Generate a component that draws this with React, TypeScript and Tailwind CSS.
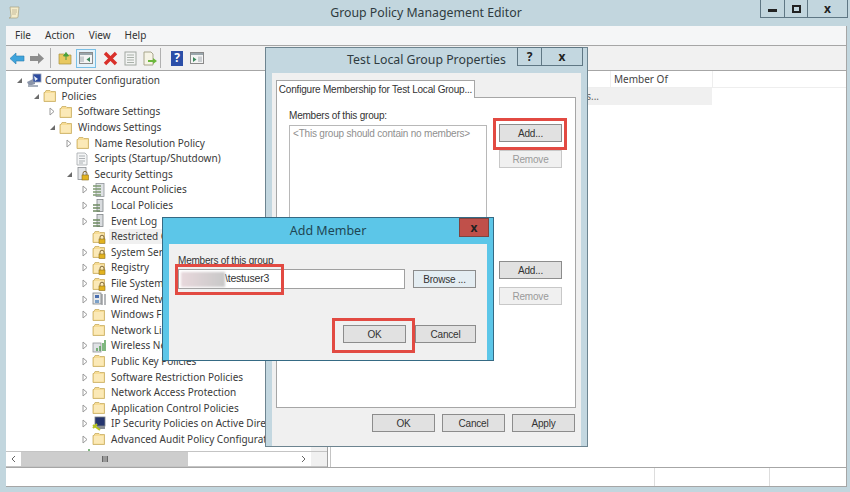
import type { ReactNode } from 'react';

type IconKind = 'computer' | 'folder' | 'lockFolder' | 'script' | 'shield' | 'policy' | 'log' | 'wired' | 'wireless' | 'ipsec';

interface TreeNode {
  label: string;
  depth: number;
  icon: IconKind;
  arrow?: 'open' | 'closed';
  selected?: boolean;
}

const tree: TreeNode[] = [
  { label: 'Computer Configuration', depth: 0, icon: 'computer', arrow: 'open' },
  { label: 'Policies', depth: 1, icon: 'folder', arrow: 'open' },
  { label: 'Software Settings', depth: 2, icon: 'folder', arrow: 'closed' },
  { label: 'Windows Settings', depth: 2, icon: 'folder', arrow: 'open' },
  { label: 'Name Resolution Policy', depth: 3, icon: 'folder', arrow: 'closed' },
  { label: 'Scripts (Startup/Shutdown)', depth: 3, icon: 'script' },
  { label: 'Security Settings', depth: 3, icon: 'shield', arrow: 'open' },
  { label: 'Account Policies', depth: 4, icon: 'policy', arrow: 'closed' },
  { label: 'Local Policies', depth: 4, icon: 'log', arrow: 'closed' },
  { label: 'Event Log', depth: 4, icon: 'log', arrow: 'closed' },
  { label: 'Restricted Groups', depth: 4, icon: 'lockFolder', selected: true },
  { label: 'System Services', depth: 4, icon: 'lockFolder', arrow: 'closed' },
  { label: 'Registry', depth: 4, icon: 'lockFolder', arrow: 'closed' },
  { label: 'File System', depth: 4, icon: 'lockFolder', arrow: 'closed' },
  { label: 'Wired Network (IEEE 802.3) Policies', depth: 4, icon: 'wired', arrow: 'closed' },
  { label: 'Windows Firewall with Advanced Security', depth: 4, icon: 'folder', arrow: 'closed' },
  { label: 'Network List Manager Policies', depth: 4, icon: 'folder' },
  { label: 'Wireless Network (IEEE 802.11) Policies', depth: 4, icon: 'wireless', arrow: 'closed' },
  { label: 'Public Key Policies', depth: 4, icon: 'folder', arrow: 'closed' },
  { label: 'Software Restriction Policies', depth: 4, icon: 'folder', arrow: 'closed' },
  { label: 'Network Access Protection', depth: 4, icon: 'folder', arrow: 'closed' },
  { label: 'Application Control Policies', depth: 4, icon: 'folder', arrow: 'closed' },
  { label: 'IP Security Policies on Active Directory', depth: 4, icon: 'ipsec', arrow: 'closed' },
  { label: 'Advanced Audit Policy Configuration', depth: 4, icon: 'folder', arrow: 'closed' },
  { label: 'Policy-based QoS', depth: 3, icon: 'wireless', arrow: 'closed' },
];

function Folder({ lock }: { lock?: boolean }) {
  return (
    <svg width="14" height="14" viewBox="0 0 14 14">
      <path d="M1 3.5V12.5H12.5V2.5H8L7 1.5H3L2 3.5Z" fill="#f7dc94" stroke="#c9ad62" strokeWidth="0.8" />
      <rect x="2" y="4" width="9.5" height="7.5" fill="#fbe9b7" />
      {lock && (
        <g>
          <path d="M8 9V7.2a2 2 0 0 1 4 0V9" fill="none" stroke="#80683a" strokeWidth="1" />
          <rect x="7" y="9" width="6" height="4.5" fill="#e2b21f" stroke="#8a6d1c" strokeWidth="0.6" />
        </g>
      )}
    </svg>
  );
}

function TreeIcon({ kind }: { kind: IconKind }) {
  if (kind === 'folder') return <Folder />;
  if (kind === 'lockFolder') return <Folder lock />;
  if (kind === 'shield') {
    return (
      <svg width="14" height="14" viewBox="0 0 14 14">
        <rect x="2" y="0.5" width="8" height="12" fill="#e4e6e8" stroke="#8c9094" strokeWidth="0.8" />
        <path d="M7 8V6.4a2 2 0 0 1 4 0V8" fill="none" stroke="#80683a" strokeWidth="1" />
        <rect x="6" y="8" width="6.5" height="5" fill="#e2b21f" stroke="#8a6d1c" strokeWidth="0.6" />
      </svg>
    );
  }
  if (kind === 'computer') {
    return (
      <svg width="16" height="15" viewBox="0 0 16 15">
        <path d="M1 9L9 5V11L3 13Z" fill="#8a94a8" />
        <rect x="7" y="1" width="8" height="8" fill="#2b4aa0" stroke="#98a2b4" strokeWidth="0.8" />
        <path d="M8 3L12 6L9 8Z" fill="#e8f0fa" />
        <rect x="2" y="12" width="10" height="2" fill="#a8b0bc" />
      </svg>
    );
  }
  if (kind === 'script') {
    return (
      <svg width="13" height="14" viewBox="0 0 13 14">
        <path d="M1 1H9L11 3V13H1Z" fill="#f4f5f6" stroke="#a4a8ac" strokeWidth="0.8" />
        <path d="M3 4H9M3 6.5H9M3 9H9M3 11H7" stroke="#9a9ea3" strokeWidth="0.8" />
      </svg>
    );
  }
  if (kind === 'policy') {
    return (
      <svg width="14" height="14" viewBox="0 0 14 14">
        <rect x="4" y="0.5" width="8" height="13" fill="#dfe2e5" stroke="#8f9498" strokeWidth="0.8" />
        <path d="M1 3H9M1 6H9M1 9H9M1 12H9" stroke="#7f9a72" strokeWidth="1.4" />
      </svg>
    );
  }
  if (kind === 'log') {
    return (
      <svg width="13" height="14" viewBox="0 0 13 14">
        <rect x="5" y="0.5" width="6" height="12" fill="#d9dcdf" stroke="#7f8488" strokeWidth="0.8" />
        <path d="M1 6H8M1 9H8M1 12H8" stroke="#6f8a62" strokeWidth="1.4" />
      </svg>
    );
  }
  if (kind === 'wired') {
    return (
      <svg width="14" height="14" viewBox="0 0 14 14">
        <rect x="1" y="1" width="8" height="11" fill="#e6e8ea" stroke="#7d8286" strokeWidth="0.8" />
        <rect x="3" y="3" width="4" height="3" fill="#4a6fb0" />
        <path d="M10 2V13M13 2V13" stroke="#6c7176" strokeWidth="1" />
        <rect x="3" y="8" width="4" height="3" fill="#7aa0c8" />
      </svg>
    );
  }
  if (kind === 'wireless') {
    return (
      <svg width="14" height="14" viewBox="0 0 14 14">
        <rect x="1" y="4" width="8" height="9" fill="#dfe2e5" stroke="#8f9498" strokeWidth="0.8" />
        <path d="M5 12V9M8 12V7M11 12V4M13 12V1" stroke="#4a9a4a" strokeWidth="1.4" />
      </svg>
    );
  }
  return (
    <svg width="14" height="15" viewBox="0 0 14 15">
      <rect x="3" y="1" width="10" height="9" fill="#24356e" stroke="#7d8286" strokeWidth="0.8" />
      <rect x="5" y="10" width="8" height="3" fill="#8a8f94" />
      <path d="M1 9L8 14M1 12L5 8" stroke="#b8c420" strokeWidth="2" />
    </svg>
  );
}

function TreeRow({ node }: { node: TreeNode }) {
  return (
    <div className="flex h-[15.6px] items-center whitespace-nowrap" style={{ paddingLeft: node.depth * 16.5 }}>
      <span className="flex h-2 w-[10px] shrink-0 items-center justify-start">
        {node.arrow === 'open' && (
          <svg width="7" height="7" viewBox="0 0 7 7">
            <path d="M6 1V6H1Z" fill="#6b6b6b" />
          </svg>
        )}
        {node.arrow === 'closed' && (
          <svg width="6" height="9" viewBox="0 0 6 9">
            <path d="M1 1L5 4.5L1 8Z" fill="#fff" stroke="#9a9a9a" />
          </svg>
        )}
      </span>
      <span className="flex w-[17px] shrink-0 items-center">
        <TreeIcon kind={node.icon} />
      </span>
      <span className={node.selected ? 'bg-[#f0f0f0] pl-[2px] pr-1' : 'pl-[2px]'}>{node.label}</span>
    </div>
  );
}

function WinButton({ children, disabled, className }: { children: ReactNode; disabled?: boolean; className?: string }) {
  const look = disabled
    ? 'border-[#c8c8c8] bg-[#f0f0f0] text-[#9a9a9a]'
    : 'border-[#8c8c8c] bg-[#e1e1e1] text-[#333]';
  return (
    <div className={`flex h-[18px] w-[63px] items-center justify-center border ${look} ${className ?? ''}`}>
      {children}
    </div>
  );
}

function ToolIcon({ children }: { children: ReactNode }) {
  return <span className="flex h-[18px] w-[20px] items-center justify-center">{children}</span>;
}

function Toolbar() {
  return (
    <div className="flex h-[25px] items-center border-b border-[#a6a6a6] bg-[#f1f1f1] pl-[1px]">
      <ToolIcon>
        <svg width="16" height="13" viewBox="0 0 16 13">
          <path d="M1 6.5L7 1V4H15V9H7V12Z" fill="#3fa4dc" stroke="#2a7db0" strokeWidth="0.6" />
        </svg>
      </ToolIcon>
      <ToolIcon>
        <svg width="16" height="13" viewBox="0 0 16 13">
          <path d="M15 6.5L9 1V4H1V9H9V12Z" fill="#8d8d8d" />
        </svg>
      </ToolIcon>
      <span className="mx-[3px] h-[20px] w-px bg-[#b0b0b0]" />
      <span className="w-[1px]" />
      <ToolIcon>
        <svg width="15" height="14" viewBox="0 0 15 14">
          <path d="M1 3H6L7 4H13V13H1Z" fill="#e8c860" stroke="#a88f3c" strokeWidth="0.7" />
          <path d="M8 9V4M5.5 5L8 1.5L10.5 5Z" fill="#4aa03c" stroke="#4aa03c" />
        </svg>
      </ToolIcon>
      <span className="ml-px flex h-[19px] w-[20px] items-center justify-center border border-[#79bfe6] bg-[#e4f2fa]">
        <svg width="14" height="12" viewBox="0 0 14 12">
          <rect x="0.5" y="0.5" width="13" height="11" fill="#f4f4f4" stroke="#8a8a8a" />
          <rect x="1" y="1" width="12" height="2" fill="#9aa6ac" />
          <path d="M2 4.5V10M4 4.5V10" stroke="#a0a8ae" />
          <path d="M11 5V10L7.5 7.5Z" fill="#3c8a5c" />
        </svg>
      </span>
      <span className="w-[4px]" />
      <ToolIcon>
        <svg width="15" height="15" viewBox="0 0 15 15">
          <path d="M2 2L13 13M13 2L2 13" stroke="#d9302a" strokeWidth="3.4" />
        </svg>
      </ToolIcon>
      <ToolIcon>
        <svg width="13" height="15" viewBox="0 0 13 15">
          <rect x="1" y="1" width="11" height="13" fill="#f2f3f2" stroke="#a2a8a2" />
          <path d="M3 4H10M3 6.5H10M3 9H10M3 11.5H10" stroke="#a8b0a8" />
        </svg>
      </ToolIcon>
      <ToolIcon>
        <svg width="15" height="15" viewBox="0 0 15 15">
          <path d="M1 1H8L10 3V14H1Z" fill="#f6f4e6" stroke="#a8a68c" />
          <path d="M5 9H10V7L14 10L10 13V11H5Z" fill="#6cb83c" />
        </svg>
      </ToolIcon>
      <span className="mr-[3px] h-[20px] w-px bg-[#b0b0b0]" />
      <span className="w-[3px]" />
      <ToolIcon>
        <span className="flex h-[15px] w-[12px] items-center justify-center bg-[#2c4fa8] text-[12px] font-bold leading-none text-white">?</span>
      </ToolIcon>
      <ToolIcon>
        <svg width="14" height="12" viewBox="0 0 14 12">
          <rect x="0.5" y="0.5" width="13" height="11" fill="#f4f4f4" stroke="#8a8a8a" />
          <rect x="1" y="1" width="12" height="2" fill="#9aa6ac" />
          <path d="M3 5V10L6.5 7.5Z" fill="#3c8a5c" />
          <path d="M9 4.5V10M11 4.5V10" stroke="#a0a8ae" />
        </svg>
      </ToolIcon>
    </div>
  );
}

function TreePane() {
  return (
    <div className="flex h-full w-[322px] shrink-0 flex-col border-r border-[#a0a0a0]">
      <div className="flex min-h-0 flex-1">
        <div className="min-w-0 flex-1 overflow-hidden pt-[2px] pl-[10px] text-[#3a3a3a]">
          {tree.map((node) => (
            <TreeRow key={node.label} node={node} />
          ))}
        </div>
        <div className="w-[16px] shrink-0 bg-[#f0f0f0]" />
      </div>
      <div className="flex h-[16px] shrink-0 border-y border-[#c4c4c4] bg-white">
        <span className="flex w-[15px] items-center justify-center text-[#777]">
          <svg width="5" height="8" viewBox="0 0 5 8"><path d="M4 1L1 4L4 7" fill="none" stroke="#666" /></svg>
        </span>
        <span className="flex w-[167px] items-center justify-center bg-[#cdcdcd]">
          <span className="h-[6px] w-[6px] border-x border-[#666] bg-[#999]" />
        </span>
        <span className="flex-1" />
        <span className="flex w-[15px] items-center justify-center">
          <svg width="5" height="8" viewBox="0 0 5 8"><path d="M1 1L4 4L1 7" fill="none" stroke="#666" /></svg>
        </span>
        <span className="w-[16px] bg-[#f0f0f0]" />
      </div>
    </div>
  );
}

const dialogFont = { fontFamily: '"Liberation Sans", Arial, sans-serif' };

function PropertiesDialog() {
  return (
    <div className="absolute left-[265px] top-[47px] flex h-[400px] w-[323px] flex-col border border-[#6d8490] bg-[#c3d7e0]">
      <div className="relative flex h-[25px] shrink-0 items-center justify-center text-[12.3px] text-[#2f3b40]">
        Test Local Group Properties
        <div className="absolute right-[4px] top-[-1px] flex h-[19px] border border-[#5f7784] text-[12px] font-bold text-[#222]">
          <span className="flex w-[24px] items-center justify-center border-r border-[#5f7784]">?</span>
          <span className="flex w-[40px] items-center justify-center">x</span>
        </div>
      </div>
      <div
        className="mx-[6px] flex min-h-0 flex-1 flex-col bg-[#f0f0f0] pl-[4px] pr-[5px] pt-[7px] text-[10px] tracking-[-0.2px]"
        style={dialogFont}
      >
        <div className="relative z-10 -mb-px flex h-[18px] w-[199px] items-center justify-center whitespace-nowrap border border-b-0 border-[#a6a6a6] bg-white text-[#333]">
          Configure Membership for Test Local Group...
        </div>
        <div className="flex h-[311px] border border-[#a6a6a6] bg-white pl-[12px] pt-[12px]">
          <div className="flex w-[198px] flex-col">
            <span className="mb-[3px] leading-[12px] text-[#333]">Members of this group:</span>
            <div className="h-[95px] whitespace-nowrap border border-[#b8b8b8] px-[3px] leading-[16px] text-[#8f8f8f]">
              &lt;This group should contain no members&gt;
            </div>
          </div>
          <div className="ml-[12px] flex flex-col pt-[14px]">
            <WinButton>Add...</WinButton>
            <WinButton disabled className="mt-[8px]">Remove</WinButton>
            <WinButton className="mt-[93px]">Add...</WinButton>
            <WinButton disabled className="mt-[8px]">Remove</WinButton>
          </div>
        </div>
        <div className="flex justify-end gap-[7px] pr-px pt-[6px]">
          <WinButton>OK</WinButton>
          <WinButton>Cancel</WinButton>
          <WinButton>Apply</WinButton>
        </div>
      </div>
      <span className="absolute left-[227px] top-[70px] h-[32px] w-[74px] border-[3px] border-[#e24a42]" />
    </div>
  );
}

function AddMemberDialog() {
  return (
    <div className="absolute left-[162px] top-[217px] flex h-[144px] w-[332px] flex-col border border-[#356a84] bg-[#5cc6e8]">
      <div className="relative flex h-[26px] shrink-0 items-center justify-center text-[12.5px] text-[#1f4654]">
        Add Member
        <span className="absolute right-[4px] top-0 flex h-[19px] w-[30px] items-center justify-center border border-[#7e4440] bg-[#c0504a] text-[12px] font-bold text-[#222]">
          x
        </span>
      </div>
      <div
        className="mx-[6px] flex min-h-0 flex-1 flex-col bg-[#f0f0f0] pl-[9px] pr-[9px] pt-[11px] text-[10px] tracking-[-0.2px] text-[#333]"
        style={dialogFont}
      >
        <span className="leading-[12px]">Members of this group</span>
        <div className="mt-[2px] flex items-center">
          <div className="flex h-[20px] w-[227px] items-center border border-[#a0a0a0] bg-white">
            <span className="ml-[2px] h-[15px] w-[44px] bg-gradient-to-r from-[#e8d8dc] to-[#c8c8c8] blur-[1px]" />
            <span className="text-[10.5px]">\testuser3</span>
          </div>
          <WinButton className="ml-[8px] border-[#7aa0bc] bg-[#e4edf2]">Browse ...</WinButton>
        </div>
        <div className="mt-[36px] flex justify-end gap-[9px] pr-[2px]">
          <WinButton>OK</WinButton>
          <WinButton className="w-[61px]!">Cancel</WinButton>
        </div>
      </div>
      <span className="absolute left-[12px] top-[46px] h-[31px] w-[109px] border-[3px] border-[#e24a42]" />
      <span className="absolute left-[169px] top-[100px] h-[35px] w-[83px] border-[3px] border-[#e24a42]" />
    </div>
  );
}

export default function App() {
  return (
    <div
      className="relative flex h-[492px] w-[850px] flex-col overflow-hidden bg-[#c2d6de] text-[10px] text-[#333]"
      style={{ fontFamily: '"Noto Sans", "Open Sans", sans-serif' }}
    >
      <div className="relative flex h-[26px] shrink-0 items-center justify-center text-[12.3px] text-[#2f3b40]">
        <svg className="absolute left-[8px] top-[6px]" width="12" height="13" viewBox="0 0 12 13">
          <path d="M2 1H11L10 11Q10 12 8 12H1Q3 12 3 10Z" fill="#f4eccb" stroke="#a8a080" strokeWidth="0.7" />
          <path d="M4 4H9M4 6H9M4 8H8" stroke="#b0a888" strokeWidth="0.7" />
        </svg>
        <span className="pl-[2px]">Group Policy Management Editor</span>
        <div className="absolute right-[2px] top-0 flex h-[18px] border border-t-0 border-[#5f7784]">
          <span className="flex w-[24px] items-center justify-center border-r border-[#5f7784]">
            <span className="mt-[4px] h-[3px] w-[9px] bg-[#222]" />
          </span>
          <span className="flex w-[23px] items-center justify-center border-r border-[#5f7784]">
            <span className="h-[8px] w-[9px] border-2 border-[#222]" />
          </span>
          <span className="flex w-[39px] items-center justify-center text-[12px] font-bold text-[#222]">x</span>
        </div>
      </div>

      <div className="mx-[6px] mr-[3px] flex h-[461px] flex-col border-b border-r border-[#a6a6a6] bg-white">
        <div className="flex h-[20px] shrink-0 items-center gap-[14px] border-b border-[#a6a6a6] bg-[#f5f6f7] pl-[9px] text-[10px] text-[#333]">
          <span>File</span>
          <span>Action</span>
          <span>View</span>
          <span>Help</span>
        </div>
        <Toolbar />
        <div className="flex min-h-0 flex-1">
          <TreePane />
          <div className="ml-[2px] flex min-w-0 flex-1 flex-col border-l border-[#c4c4c4]">
            <div className="flex h-[17px] shrink-0 border-b border-[#eeeeee]">
              <span className="w-[279px]" />
              <span className="flex w-[103px] items-center border-x border-[#eeeeee] pl-[3px] text-[#444]">Member Of</span>
            </div>
            <div className="flex h-[17px] w-[381px] items-center bg-[#f0f0f0]">
              <span className="w-[268px] text-right text-[#666]">Test Local Groups...</span>
            </div>
          </div>
        </div>
        <div className="flex h-[19px] shrink-0 border-t border-[#a6a6a6] bg-white">
          <span className="w-[649px] border-r border-[#dddddd]" />
          <span className="w-[115px] border-r border-[#dddddd]" />
        </div>
      </div>

      <PropertiesDialog />
      <AddMemberDialog />
    </div>
  );
}
